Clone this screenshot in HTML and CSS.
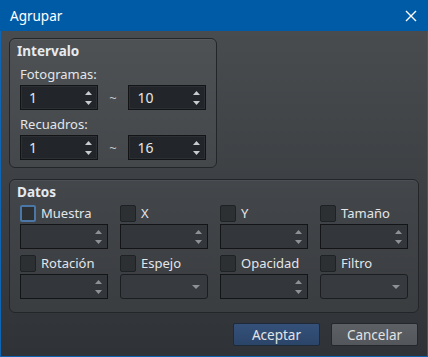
FILE: index.html
```html
<!DOCTYPE html>
<html>
<head>
	<title>Agrupar</title>
	<meta charset="utf-8">
	<link rel="stylesheet" href="styles.css">
</head>
<body>
	<div class="window">
		<div class="titlebar">
			<span class="title">Agrupar</span>
			<svg class="close" width="12" height="12" viewBox="0 0 12 12"><path d="M1 1L11 11M11 1L1 11" stroke="#fff" stroke-width="1.4"/></svg>
		</div>
		<div class="content">
			<div class="group intervalo">
				<div class="gtitle">Intervalo</div>
				<div class="lbl first">Fotogramas:</div>
				<div class="range">
					<div class="spin"><span class="val">1</span><span class="arrows"><svg width="7" height="14" viewBox="0 0 7 14"><path d="M3.5 0L7 4H0Z M0 10H7L3.5 14Z" fill="#c9ccce"/></svg></span></div>
					<span class="tilde">~</span>
					<div class="spin"><span class="val">10</span><span class="arrows"><svg width="7" height="14" viewBox="0 0 7 14"><path d="M3.5 0L7 4H0Z M0 10H7L3.5 14Z" fill="#c9ccce"/></svg></span></div>
				</div>
				<div class="lbl">Recuadros:</div>
				<div class="range">
					<div class="spin"><span class="val">1</span><span class="arrows"><svg width="7" height="14" viewBox="0 0 7 14"><path d="M3.5 0L7 4H0Z M0 10H7L3.5 14Z" fill="#c9ccce"/></svg></span></div>
					<span class="tilde">~</span>
					<div class="spin"><span class="val">16</span><span class="arrows"><svg width="7" height="14" viewBox="0 0 7 14"><path d="M3.5 0L7 4H0Z M0 10H7L3.5 14Z" fill="#c9ccce"/></svg></span></div>
				</div>
			</div>

			<div class="group datos">
				<div class="gtitle">Datos</div>
				<div class="grid">
					<div class="field">
						<label class="check"><span class="box focus"></span>Muestra</label>
						<div class="spin off"><span class="arrows"><svg width="7" height="14" viewBox="0 0 7 14"><path d="M3.5 0L7 4H0Z M0 10H7L3.5 14Z" fill="#8e9296"/></svg></span></div>
					</div>
					<div class="field">
						<label class="check"><span class="box"></span>X</label>
						<div class="spin off"><span class="arrows"><svg width="7" height="14" viewBox="0 0 7 14"><path d="M3.5 0L7 4H0Z M0 10H7L3.5 14Z" fill="#8e9296"/></svg></span></div>
					</div>
					<div class="field">
						<label class="check"><span class="box"></span>Y</label>
						<div class="spin off"><span class="arrows"><svg width="7" height="14" viewBox="0 0 7 14"><path d="M3.5 0L7 4H0Z M0 10H7L3.5 14Z" fill="#8e9296"/></svg></span></div>
					</div>
					<div class="field">
						<label class="check"><span class="box"></span>Tamaño</label>
						<div class="spin off"><span class="arrows"><svg width="7" height="14" viewBox="0 0 7 14"><path d="M3.5 0L7 4H0Z M0 10H7L3.5 14Z" fill="#8e9296"/></svg></span></div>
					</div>
					<div class="field">
						<label class="check"><span class="box"></span>Rotación</label>
						<div class="spin off"><span class="arrows"><svg width="7" height="14" viewBox="0 0 7 14"><path d="M3.5 0L7 4H0Z M0 10H7L3.5 14Z" fill="#8e9296"/></svg></span></div>
					</div>
					<div class="field">
						<label class="check"><span class="box"></span>Espejo</label>
						<div class="combo"><svg width="8" height="4" viewBox="0 0 8 4"><path d="M0 0H8L4 4Z" fill="#8e9296"/></svg></div>
					</div>
					<div class="field">
						<label class="check"><span class="box"></span>Opacidad</label>
						<div class="spin off"><span class="arrows"><svg width="7" height="14" viewBox="0 0 7 14"><path d="M3.5 0L7 4H0Z M0 10H7L3.5 14Z" fill="#8e9296"/></svg></span></div>
					</div>
					<div class="field">
						<label class="check"><span class="box"></span>Filtro</label>
						<div class="combo"><svg width="8" height="4" viewBox="0 0 8 4"><path d="M0 0H8L4 4Z" fill="#8e9296"/></svg></div>
					</div>
				</div>
			</div>

			<div class="buttons">
				<button class="btn ok">Aceptar</button>
				<button class="btn">Cancelar</button>
			</div>
		</div>
	</div>
</body>
</html>
```

FILE: styles.css
```css
*{
	margin:0;
	padding:0;
	box-sizing:border-box;
}
body{
	width:428px;
	height:357px;
	overflow:hidden;
	font-family:"Noto Sans","DejaVu Sans",sans-serif;
	font-size:13px;
	color:#e3e6e9;
}
.window{
	width:428px;
	height:357px;
	border:1px solid #1064b4;
	border-top:none;
	display:flex;
	flex-direction:column;
}
.titlebar{
	height:31px;
	background:#005ba7;
	margin:0 -1px;
	padding:0 11px 0 10px;
	display:flex;
	align-items:center;
	justify-content:space-between;
	color:#fff;
}
.title{
	font-size:13.5px;
}
.close{
	display:block;
}
.content{
	flex:1;
	background:linear-gradient(#494c4f, #2f3337);
	padding:7px 8px 0 8px;
	display:flex;
	flex-direction:column;
}
.group{
	border:1px solid #232629;
	border-radius:6px;
	background:rgba(255,255,255,0.035);
	box-shadow:inset 0 1px 0 rgba(255,255,255,0.05);
	padding:4px 10px 0 10px;
}
.intervalo{
	width:208px;
	height:130px;
}
.gtitle{
	font-weight:bold;
	font-size:13.5px;
	line-height:16px;
	margin-left:-3px;
	color:#e6eaee;
}
.lbl{
	line-height:16px;
	margin-top:6px;
}
.lbl.first{
	margin-top:7px;
}
.range{
	display:flex;
	align-items:center;
	margin-top:3px;
}
.tilde{
	width:31px;
	text-align:center;
	color:#c8ccd0;
}
.spin{
	width:78px;
	height:25px;
	background:#22262a;
	border:1px solid #121416;
	box-shadow:inset 0 0 0 1px #2c3034;
	display:flex;
	align-items:center;
	padding:0 5px 0 8px;
}
.val{
	flex:1;
	font-size:14px;
	color:#e4e6e8;
}
.arrows{
	margin-left:auto;
	display:flex;
}
.datos{
	margin-top:11px;
	width:410px;
	height:134px;
	padding-top:4px;
}
.grid{
	display:grid;
	grid-template-columns:repeat(4, 88px);
	column-gap:12px;
	row-gap:6px;
	margin-top:5px;
}
.field{
	display:flex;
	flex-direction:column;
	gap:3px;
}
.check{
	display:flex;
	align-items:center;
	height:16px;
	line-height:16px;
}
.box{
	width:16px;
	height:17px;
	background:#2c3033;
	border:1px solid #1f2225;
	border-radius:2px;
	margin-right:5px;
}
.box.focus{
	border:2px solid #4a77a6;
}
.spin.off{
	width:88px;
	background:#33373b;
	box-shadow:none;
}
.combo{
	width:88px;
	height:25px;
	background:#373b3f;
	border:1px solid #1b1d20;
	border-radius:3px;
	display:flex;
	align-items:center;
	justify-content:flex-end;
	padding-right:7px;
}
.combo svg{
	display:block;
}
.buttons{
	display:flex;
	justify-content:flex-end;
	gap:11px;
	margin-top:10px;
	padding-right:1px;
}
.btn{
	width:87px;
	height:23px;
	font-family:"Noto Sans","DejaVu Sans",sans-serif;
	font-size:13.5px;
	color:#e2e4e6;
	background:linear-gradient(#5d6165, #53575b);
	border:1px solid #25282b;
	border-radius:2px;
}
.btn.ok{
	background:linear-gradient(#35517a, #2b4569);
	border-color:#1e2a3a;
}
```
